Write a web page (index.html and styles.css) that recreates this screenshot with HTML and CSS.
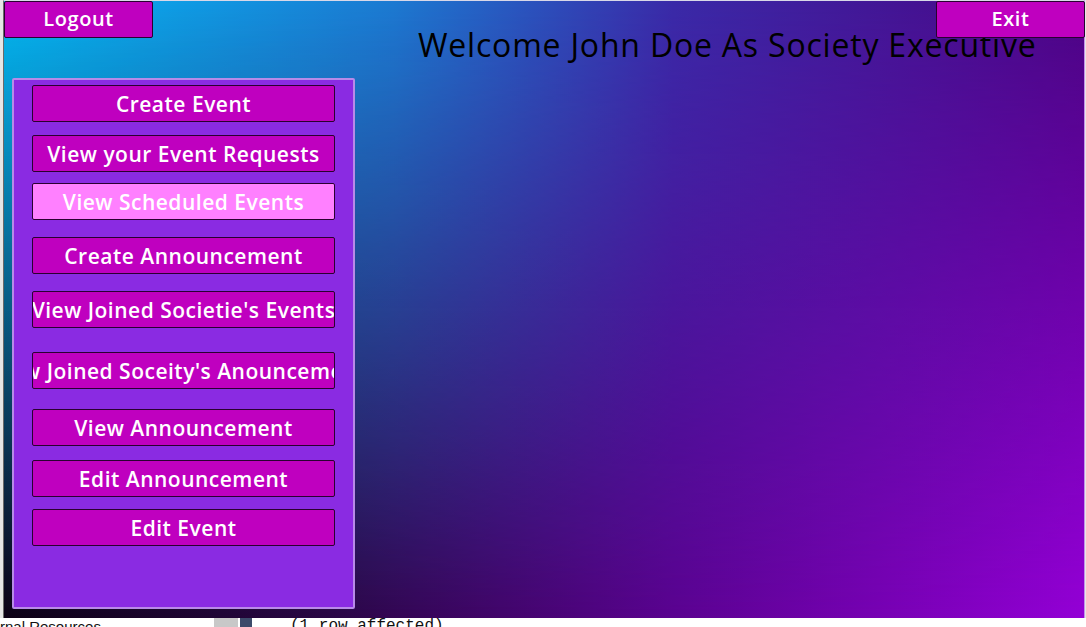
FILE: index.html
```html
<!DOCTYPE html>
<html>
<head>
<meta charset="utf-8">
<link rel="stylesheet" href="styles.css">
</head>
<body>
<div class="screen">
  <div class="frame">
    <div class="window">
      <div class="header">
        <button class="btn top-btn">Logout</button>
        <h1 class="title">Welcome John Doe As Society Executive</h1>
      </div>
      <button class="btn top-btn exit">Exit</button>
      <div class="panel">
        <button class="btn menu">Create Event</button>
        <button class="btn menu">View your Event Requests</button>
        <button class="btn menu active">View Scheduled Events</button>
        <button class="btn menu">Create Announcement</button>
        <button class="btn menu">View Joined Societie's Events</button>
        <button class="btn menu"><span>View Joined Soceity's Anouncements</span></button>
        <button class="btn menu">View Announcement</button>
        <button class="btn menu">Edit Announcement</button>
        <button class="btn menu">Edit Event</button>
      </div>
    </div>
  </div>
  <div class="status">
    <span class="res">rnal Resources</span>
    <span class="box grey"></span>
    <span class="box navy"></span>
    <span class="mono">(1 row affected)</span>
  </div>
</div>
</body>
</html>
```
FILE: styles.css
```css
html, body {
  margin: 0;
  padding: 0;
  background: #ffffff;
}
.screen {
  width: 1086px;
  height: 627px;
  overflow: hidden;
  display: flex;
  flex-direction: column;
}
.frame {
  height: 618px;
  display: flex;
  background: #e6e6e6;
  padding-left: 3px;
}
.window {
  position: relative;
  width: 1082px;
  height: 618px;
  border-left: 1px solid #6a6a6a;
  border-top: 1px solid #d8d8e8;
  border-right: 1px solid #c890e8;
  box-sizing: border-box;
  background: linear-gradient(to right, #04b8f4 0%, #1c7ad2 36%, #3a2aa8 62%, #4b0484 100%);
  isolation: isolate;
}
.window::before {
  content: "";
  position: absolute;
  inset: 0;
  z-index: -1;
  background: linear-gradient(to right, #0c0014 0%, #2a0644 30%, #5a0290 62%, #9400d6 100%);
  -webkit-mask-image: linear-gradient(to bottom, rgba(0,0,0,0) 0%, rgba(0,0,0,0.5) 50%, #000 100%);
  mask-image: linear-gradient(to bottom, rgba(0,0,0,0) 0%, rgba(0,0,0,0.5) 50%, #000 100%);
}
.header {
  display: flex;
  align-items: flex-start;
}
.btn {
  font-family: "Open Sans", "Noto Sans", sans-serif;
  color: #ffffff;
  background: #bf00bf;
  border: 1px solid #2a0030;
  border-radius: 2px;
  padding: 0;
  box-sizing: border-box;
  display: flex;
  align-items: center;
  justify-content: center;
  white-space: nowrap;
  overflow: hidden;
}
.top-btn {
  width: 149px;
  height: 37px;
  font-size: 20px;
  font-weight: 600;
  letter-spacing: 0.6px;
  padding-bottom: 2px;
}
.exit {
  position: absolute;
  top: 0;
  right: -1px;
}
.title {
  margin: 26px 0 0 265px;
  font-family: "Open Sans", "Noto Sans", sans-serif;
  font-weight: 500;
  font-size: 32px;
  letter-spacing: 0.8px;
  color: #000000;
  line-height: 36px;
  white-space: nowrap;
}
.panel {
  position: absolute;
  left: 8px;
  top: 77px;
  width: 343px;
  height: 531px;
  box-sizing: border-box;
  background: #8a2be2;
  border: 2px solid #b88ae8;
  border-radius: 2px;
  display: flex;
  flex-direction: column;
  padding: 5px 0 0 18px;
}
.menu {
  width: 303px;
  height: 37px;
  font-size: 21px;
  font-weight: 600;
  letter-spacing: 0.5px;
  flex: none;
}
.menu.active {
  background: #ff80ff;
}
.menu span {
  flex: none;
}
.menu:nth-child(2) { margin-top: 13px; }
.menu:nth-child(3) { margin-top: 11px; }
.menu:nth-child(4) { margin-top: 17px; }
.menu:nth-child(5) { margin-top: 17px; }
.menu:nth-child(6) { margin-top: 24px; }
.menu:nth-child(7) { margin-top: 20px; }
.menu:nth-child(8) { margin-top: 14px; }
.menu:nth-child(9) { margin-top: 12px; }
.status {
  height: 9px;
  position: relative;
  display: flex;
  align-items: flex-start;
  overflow: hidden;
}
.res {
  font-family: "Liberation Sans", sans-serif;
  font-size: 15px;
  line-height: 15px;
  margin-top: 1px;
  width: 214px;
  color: #111;
}
.box {
  height: 9px;
}
.grey {
  width: 24px;
  background: #c8c8c8;
  margin-right: 2px;
}
.navy {
  width: 12px;
  background: #3c4a6a;
}
.mono {
  font-family: "Liberation Mono", monospace;
  font-size: 16px;
  line-height: 16px;
  margin-top: 0px;
  margin-left: 38px;
  color: #111;
}
```
